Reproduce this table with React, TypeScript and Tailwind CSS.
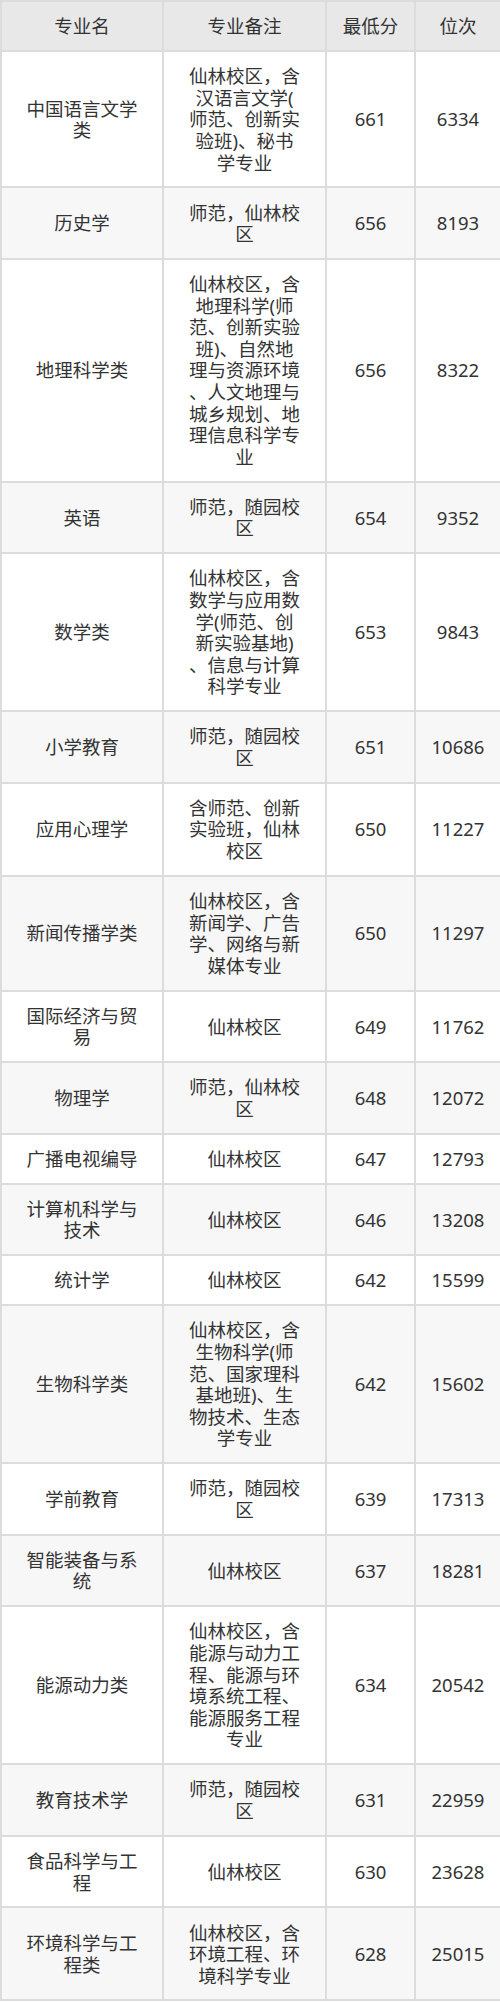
type Row = {
  name: string[];
  note: string[];
  score: string;
  rank: string;
};

const rows: Row[] = [
  { name: ["中国语言文学", "类"], note: ["仙林校区，含", "汉语言文学(", "师范、创新实", "验班)、秘书", "学专业"], score: "661", rank: "6334" },
  { name: ["历史学"], note: ["师范，仙林校", "区"], score: "656", rank: "8193" },
  {
    name: ["地理科学类"],
    note: ["仙林校区，含", "地理科学(师", "范、创新实验", "班)、自然地", "理与资源环境", "、人文地理与", "城乡规划、地", "理信息科学专", "业"],
    score: "656",
    rank: "8322",
  },
  { name: ["英语"], note: ["师范，随园校", "区"], score: "654", rank: "9352" },
  { name: ["数学类"], note: ["仙林校区，含", "数学与应用数", "学(师范、创", "新实验基地)", "、信息与计算", "科学专业"], score: "653", rank: "9843" },
  { name: ["小学教育"], note: ["师范，随园校", "区"], score: "651", rank: "10686" },
  { name: ["应用心理学"], note: ["含师范、创新", "实验班，仙林", "校区"], score: "650", rank: "11227" },
  { name: ["新闻传播学类"], note: ["仙林校区，含", "新闻学、广告", "学、网络与新", "媒体专业"], score: "650", rank: "11297" },
  { name: ["国际经济与贸", "易"], note: ["仙林校区"], score: "649", rank: "11762" },
  { name: ["物理学"], note: ["师范，仙林校", "区"], score: "648", rank: "12072" },
  { name: ["广播电视编导"], note: ["仙林校区"], score: "647", rank: "12793" },
  { name: ["计算机科学与", "技术"], note: ["仙林校区"], score: "646", rank: "13208" },
  { name: ["统计学"], note: ["仙林校区"], score: "642", rank: "15599" },
  { name: ["生物科学类"], note: ["仙林校区，含", "生物科学(师", "范、国家理科", "基地班)、生", "物技术、生态", "学专业"], score: "642", rank: "15602" },
  { name: ["学前教育"], note: ["师范，随园校", "区"], score: "639", rank: "17313" },
  { name: ["智能装备与系", "统"], note: ["仙林校区"], score: "637", rank: "18281" },
  { name: ["能源动力类"], note: ["仙林校区，含", "能源与动力工", "程、能源与环", "境系统工程、", "能源服务工程", "专业"], score: "634", rank: "20542" },
  { name: ["教育技术学"], note: ["师范，随园校", "区"], score: "631", rank: "22959" },
  { name: ["食品科学与工", "程"], note: ["仙林校区"], score: "630", rank: "23628" },
  { name: ["环境科学与工", "程类"], note: ["仙林校区，含", "环境工程、环", "境科学专业"], score: "628", rank: "25015" },
];

const cell = "border-2 border-[#dcdcdc] px-1 py-[13.2px] text-center align-middle";

function Lines({ lines }: { lines: string[] }) {
  return (
    <>
      {lines.map((l, i) => (
        <span key={i} className="block whitespace-nowrap">
          {l}
        </span>
      ))}
    </>
  );
}

export default function App() {
  return (
    <div className="w-[500px] bg-white">
      <table className="w-full table-fixed border-collapse font-['Noto_Sans','Noto_Sans_CJK_SC',sans-serif] text-[18.5px] leading-[21.6px] text-[#333]">
        <colgroup>
          <col className="w-[162px]" />
          <col className="w-[163px]" />
          <col className="w-[89px]" />
          <col className="w-[86px]" />
        </colgroup>
        <thead>
          <tr className="bg-[#e8e8e8]">
            <th className={`${cell} font-normal`}>专业名</th>
            <th className={`${cell} font-normal`}>专业备注</th>
            <th className={`${cell} font-normal`}>最低分</th>
            <th className={`${cell} font-normal`}>位次</th>
          </tr>
        </thead>
        <tbody>
          {rows.map((r, i) => (
            <tr key={i} className={i % 2 === 1 ? "bg-[#f7f7f7]" : "bg-white"}>
              <td className={cell}>
                <Lines lines={r.name} />
              </td>
              <td className={cell}>
                <Lines lines={r.note} />
              </td>
              <td className={cell}>{r.score}</td>
              <td className={cell}>{r.rank}</td>
            </tr>
          ))}
        </tbody>
      </table>
    </div>
  );
}
